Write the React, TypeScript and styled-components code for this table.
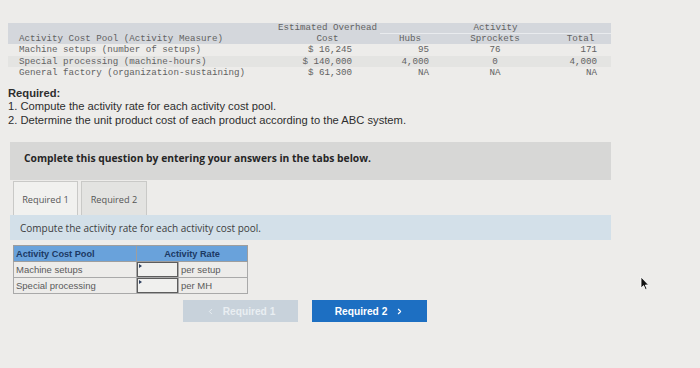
import React from "react";
import styled, { createGlobalStyle, css } from "styled-components";
import { ChevronLeft, ChevronRight } from "lucide-react";

const Global = createGlobalStyle`
  html, body {
    margin: 0;
    padding: 0;
    background: #edecea;
  }
  body {
    width: 700px;
    height: 368px;
    overflow: hidden;
    font-family: "Liberation Sans", Arial, sans-serif;
  }
`;

const Page = styled.div`
  position: relative;
  width: 700px;
  height: 368px;
  padding-top: 23px;
  box-sizing: border-box;
`;

/* ---------- cost pool data table ---------- */

const CostTable = styled.table`
  margin-left: 8px;
  width: 603px;
  border-collapse: collapse;
  table-layout: fixed;
  font-family: "Liberation Mono", "Courier New", monospace;
  font-size: 9.2px;
  color: #626262;
`;

const Col = styled.col<{ $w: number }>`
  width: ${(p) => p.$w}px;
`;

type Align = "left" | "right" | "center";

const cellAlign = css<{ $align?: Align; $pad?: number }>`
  text-align: ${(p) => p.$align ?? "center"};
  ${(p) =>
    p.$align === "left"
      ? `padding-left: ${p.$pad ?? 0}px;`
      : p.$align === "right"
      ? `padding-right: ${p.$pad ?? 0}px;`
      : ""}
`;

const HeadCell = styled.th<{ $align?: Align; $pad?: number; $rule?: boolean }>`
  background: #d4d7dc;
  font-weight: normal;
  height: 10px;
  line-height: 10px;
  padding: 0;
  white-space: nowrap;
  ${cellAlign};
  ${(p) => p.$rule && "border-bottom: 1px solid #e9ebee;"}
`;

const DataRow = styled.tr<{ $stripe?: boolean }>`
  background: ${(p) => (p.$stripe ? "#e4e4e2" : "transparent")};
`;

const DataCell = styled.td<{ $align?: Align; $pad?: number }>`
  height: 11.5px;
  line-height: 11.5px;
  padding: 0;
  white-space: nowrap;
  ${cellAlign};
`;

/* ---------- required text ---------- */

const Required = styled.div`
  margin: 8px 0 0 8px;
  font-size: 11.2px;
  line-height: 13.5px;
  color: #2e2e2e;
`;

const RequiredTitle = styled.div`
  font-weight: bold;
`;

/* ---------- answer area ---------- */

const Notice = styled.div`
  margin: 15px 0 0 10px;
  width: 601px;
  height: 38px;
  box-sizing: border-box;
  padding: 9px 0 0 14px;
  background: #d7d7d6;
  font-family: "Open Sans", "Liberation Sans", sans-serif;
  font-weight: 700;
  font-size: 10.3px;
  line-height: 14px;
  color: #262626;
`;

const TabBar = styled.div`
  display: flex;
  gap: 3px;
  margin: 1px 0 0 13px;
  height: 34px;
`;

const Tab = styled.div<{ $active?: boolean; $w: number }>`
  width: ${(p) => p.$w}px;
  box-sizing: border-box;
  border: 1px solid #c9c9c7;
  border-bottom: none;
  background: ${(p) => (p.$active ? "#f1f1ef" : "#e3e3e1")};
  display: flex;
  align-items: center;
  justify-content: center;
  padding-top: 2px;
  font-family: "Open Sans", "Liberation Sans", sans-serif;
  font-size: 9.2px;
  color: #555;
`;

const Prompt = styled.div`
  margin-left: 10px;
  width: 601px;
  height: 25px;
  box-sizing: border-box;
  padding: 1px 0 0 10px;
  display: flex;
  align-items: center;
  background: #d3e0e9;
  font-family: "Open Sans", "Liberation Sans", sans-serif;
  font-size: 10px;
  color: #3d3d3d;
`;

const RateTable = styled.table`
  margin: 5px 0 0 13px;
  width: 234px;
  border-collapse: collapse;
  table-layout: fixed;
  font-size: 9.5px;
  border: 1px solid #9e9e9e;
`;

const RateHead = styled.th<{ $align?: Align }>`
  background: #69a2db;
  color: #1c3963;
  font-weight: bold;
  font-size: 9.2px;
  height: 15px;
  padding: 0 0 0 ${(p) => (p.$align === "left" ? 2 : 0)}px;
  text-align: ${(p) => p.$align ?? "center"};
  border: 1px solid #9e9e9e;
`;

const RateCell = styled.td<{ $input?: boolean }>`
  height: 15px;
  padding: 0 0 0 ${(p) => (p.$input ? 0 : 2)}px;
  border: 1px solid #a9a9a9;
  color: #5a5a5a;
  white-space: nowrap;
`;

const AnswerBox = styled.div`
  position: relative;
  height: 15px;
  box-sizing: border-box;
  border: 1.5px solid #5d5d5d;
  background: #f0f0ee;

  &::before {
    content: "";
    position: absolute;
    left: 1px;
    top: 1px;
    border-top: 2.5px solid transparent;
    border-bottom: 2.5px solid transparent;
    border-left: 3px solid #2d3f5e;
  }
`;

const NavRow = styled.div`
  display: flex;
  gap: 14px;
  margin: 6px 0 0 183px;
`;

const NavButton = styled.div<{ $primary?: boolean }>`
  width: 115px;
  height: 22px;
  display: flex;
  align-items: center;
  justify-content: center;
  gap: 8px;
  font-weight: bold;
  font-size: 10.2px;
  background: ${(p) => (p.$primary ? "#1d6fc2" : "#c8d2db")};
  color: ${(p) => (p.$primary ? "#ffffff" : "#e9eef2")};
`;

const Pointer = styled.svg`
  position: absolute;
  left: 640px;
  top: 276px;
`;

const pools = [
  ["Machine setups (number of setups)", "$ 16,245", "95", "76", "171"],
  ["Special processing (machine-hours)", "$ 140,000", "4,000", "0", "4,000"],
  ["General factory (organization-sustaining)", "$ 61,300", "NA", "NA", "NA"],
];

export default function App() {
  return (
    <Page>
      <Global />
      <CostTable>
        <colgroup>
          <Col $w={267} />
          <Col $w={105} />
          <Col $w={60} />
          <Col $w={110} />
          <Col $w={61} />
        </colgroup>
        <thead>
          <tr>
            <HeadCell />
            <HeadCell>Estimated Overhead</HeadCell>
            <HeadCell colSpan={3} $rule>
              Activity
            </HeadCell>
          </tr>
          <tr>
            <HeadCell $align="left" $pad={11}>
              Activity Cost Pool (Activity Measure)
            </HeadCell>
            <HeadCell>Cost</HeadCell>
            <HeadCell>Hubs</HeadCell>
            <HeadCell>Sprockets</HeadCell>
            <HeadCell>Total</HeadCell>
          </tr>
        </thead>
        <tbody>
          {pools.map((r, i) => (
            <DataRow key={r[0]} $stripe={i === 1}>
              <DataCell $align="left" $pad={11}>
                {r[0]}
              </DataCell>
              <DataCell $align="right" $pad={28}>
                {r[1]}
              </DataCell>
              <DataCell $align="right" $pad={11}>
                {r[2]}
              </DataCell>
              <DataCell>{r[3]}</DataCell>
              <DataCell $align="right" $pad={14}>
                {r[4]}
              </DataCell>
            </DataRow>
          ))}
        </tbody>
      </CostTable>

      <Required>
        <RequiredTitle>Required:</RequiredTitle>
        <div>1. Compute the activity rate for each activity cost pool.</div>
        <div>2. Determine the unit product cost of each product according to the ABC system.</div>
      </Required>

      <Notice>Complete this question by entering your answers in the tabs below.</Notice>

      <TabBar>
        <Tab $active $w={65}>
          Required 1
        </Tab>
        <Tab $w={66}>Required 2</Tab>
      </TabBar>

      <Prompt>Compute the activity rate for each activity cost pool.</Prompt>

      <RateTable>
        <colgroup>
          <Col $w={123} />
          <Col $w={42} />
          <Col $w={69} />
        </colgroup>
        <thead>
          <tr>
            <RateHead $align="left">Activity Cost Pool</RateHead>
            <RateHead colSpan={2}>Activity Rate</RateHead>
          </tr>
        </thead>
        <tbody>
          <tr>
            <RateCell>Machine setups</RateCell>
            <RateCell $input>
              <AnswerBox />
            </RateCell>
            <RateCell>per setup</RateCell>
          </tr>
          <tr>
            <RateCell>Special processing</RateCell>
            <RateCell $input>
              <AnswerBox />
            </RateCell>
            <RateCell>per MH</RateCell>
          </tr>
        </tbody>
      </RateTable>

      <NavRow>
        <NavButton>
          <ChevronLeft size={9} strokeWidth={2.5} />
          Required 1
        </NavButton>
        <NavButton $primary>
          Required 2
          <ChevronRight size={9} strokeWidth={3} />
        </NavButton>
      </NavRow>

      <Pointer width="10" height="15" viewBox="0 0 10 15">
        <path d="M1 1 L1 12 L3.6 9.6 L5.4 13.6 L7 12.9 L5.3 9 L8.6 9 Z" fill="#111" stroke="#fff" strokeWidth="0.8" />
      </Pointer>
    </Page>
  );
}
